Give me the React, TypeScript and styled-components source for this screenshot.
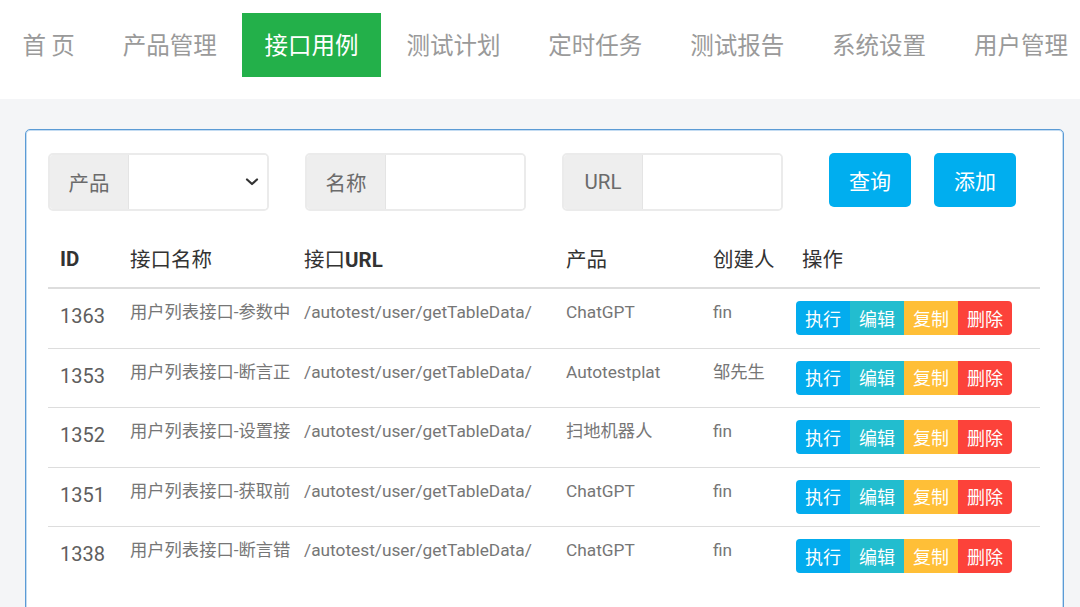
import React from "react";
import styled, { createGlobalStyle } from "styled-components";

const Global = createGlobalStyle`
  html, body { margin: 0; padding: 0; background: #f4f5f7; }
  body { font-family: Roboto, "Noto Sans CJK SC", sans-serif; }
`;

const Page = styled.div`
  width: 1080px;
  height: 607px;
  overflow: hidden;
  background: #f4f5f7;
`;

const Nav = styled.nav`
  display: flex;
  gap: 3.1px;
  height: 99px;
  padding-top: 13px;
  box-sizing: border-box;
  background: #fff;
`;

const NavItem = styled.div<{ $active?: boolean }>`
  height: 64px;
  display: flex;
  align-items: center;
  padding: 0 22.3px 2px 22.5px;
  box-sizing: border-box;
  font-size: 23.5px;
  font-family: "Noto Sans CJK SC", sans-serif;
  white-space: pre;
  color: ${(p) => (p.$active ? "#fff" : "#9a9a9a")};
  background: ${(p) => (p.$active ? "#23b04a" : "transparent")};
`;

const Main = styled.main`
  padding: 30px 16px 0 25px;
`;

const Panel = styled.section`
  background: #fff;
  border: 1px solid #5b9bd5;
  box-shadow: inset 0 0 0 1px #c4dcf2;
  border-radius: 5px;
  padding: 23px 23px 40px 22px;
  min-height: 500px;
`;

const Toolbar = styled.div`
  display: flex;
  align-items: flex-start;
  gap: 36px;
`;

const Group = styled.div`
  display: flex;
  width: 221px;
  height: 58px;
  box-sizing: border-box;
  border: 2px solid #ebebeb;
  border-radius: 5px;
  overflow: hidden;
`;

const Label = styled.div`
  width: 78px;
  flex: none;
  display: flex;
  align-items: center;
  justify-content: center;
  background: #eee;
  color: #6b6b6b;
  font-size: 20.5px;
  border-right: 1px solid #e4e4e4;
  font-family: Roboto, "Noto Sans CJK SC", sans-serif;
`;

const Field = styled.div`
  flex: 1;
  display: flex;
  align-items: center;
  justify-content: flex-end;
  padding-right: 8px;
  background: #fff;
`;

const Buttons = styled.div`
  display: flex;
  gap: 23px;
  margin-left: 10px;
`;

const Btn = styled.button`
  height: 54px;
  padding: 0 20px;
  border: none;
  border-radius: 5px;
  background: #00aeef;
  color: #fff;
  font-size: 21px;
  font-family: "Noto Sans CJK SC", sans-serif;
`;

const Table = styled.table`
  margin-top: 20px;
  width: 992px;
  border-collapse: collapse;
  table-layout: fixed;
`;

const Th = styled.th`
  text-align: left;
  padding: 12px 12px;
  font-size: 20.5px;
  line-height: 30px;
  color: #333;
  font-weight: 700;
  border-bottom: 2px solid #ddd;
  white-space: nowrap;
`;

const HeadCn = styled.span`
  font-weight: 400;
  font-family: "Noto Sans CJK SC", sans-serif;
`;

const Tr = styled.tr`
  border-top: 1px solid #ddd;
`;

const Td = styled.td<{ $big?: boolean; $tight?: boolean }>`
  vertical-align: top;
  padding: ${(p) =>
    p.$tight ? "12px 13px 12.5px 6px" : p.$big ? "12px 13px 12px 12px" : "11px 13px 12px 12px"};
  font-size: ${(p) => (p.$big ? "20px" : "17.3px")};
  line-height: ${(p) => (p.$big ? "30px" : "25px")};
  color: ${(p) => (p.$big ? "#5e5e5e" : "#767676")};
  white-space: nowrap;
  font-family: Roboto, "Noto Sans CJK SC", sans-serif;
`;

const Actions = styled.div`
  display: inline-flex;
  border-radius: 4px;
  overflow: hidden;
  vertical-align: top;
`;

const ActionBtn = styled.span<{ $bg: string }>`
  width: 54px;
  height: 34px;
  display: flex;
  align-items: center;
  justify-content: center;
  background: ${(p) => p.$bg};
  color: #fff;
  font-size: 18px;
  font-family: "Noto Sans CJK SC", sans-serif;
`;

const Chevron = () => (
  <svg width="14" height="10" viewBox="0 0 14 10">
    <path d="M2 2.5 L7 7 L12 2.5" fill="none" stroke="#333" strokeWidth="2.2" strokeLinecap="round" strokeLinejoin="round" />
  </svg>
);

const navItems = ["首 页", "产品管理", "接口用例", "测试计划", "定时任务", "测试报告", "系统设置", "用户管理"];

const rows = [
  { id: "1363", name: "用户列表接口-参数中", product: "ChatGPT", user: "fin" },
  { id: "1353", name: "用户列表接口-断言正", product: "Autotestplat", user: "邹先生" },
  { id: "1352", name: "用户列表接口-设置接", product: "扫地机器人", user: "fin" },
  { id: "1351", name: "用户列表接口-获取前", product: "ChatGPT", user: "fin" },
  { id: "1338", name: "用户列表接口-断言错", product: "ChatGPT", user: "fin" },
];

const actions = [
  { t: "执行", c: "#03acee" },
  { t: "编辑", c: "#22bdcf" },
  { t: "复制", c: "#ffbf37" },
  { t: "删除", c: "#fc423a" },
];

export default function App() {
  return (
    <Page>
      <Global />
      <Nav>
        {navItems.map((n) => (
          <NavItem key={n} $active={n === "接口用例"}>
            {n}
          </NavItem>
        ))}
      </Nav>
      <Main>
        <Panel>
          <Toolbar>
            <Group>
              <Label>产品</Label>
              <Field>
                <Chevron />
              </Field>
            </Group>
            <Group>
              <Label>名称</Label>
              <Field />
            </Group>
            <Group>
              <Label>URL</Label>
              <Field />
            </Group>
            <Buttons>
              <Btn>查询</Btn>
              <Btn>添加</Btn>
            </Buttons>
          </Toolbar>
          <Table>
            <colgroup>
              <col style={{ width: 70 }} />
              <col style={{ width: 174 }} />
              <col style={{ width: 262 }} />
              <col style={{ width: 147 }} />
              <col style={{ width: 89 }} />
              <col style={{ width: 250 }} />
            </colgroup>
            <thead>
              <tr>
                <Th>ID</Th>
                <Th><HeadCn>接口名称</HeadCn></Th>
                <Th><HeadCn>接口</HeadCn>URL</Th>
                <Th><HeadCn>产品</HeadCn></Th>
                <Th><HeadCn>创建人</HeadCn></Th>
                <Th><HeadCn>操作</HeadCn></Th>
              </tr>
            </thead>
            <tbody>
              {rows.map((r) => (
                <Tr key={r.id}>
                  <Td $big>{r.id}</Td>
                  <Td>{r.name}</Td>
                  <Td>/autotest/user/getTableData/</Td>
                  <Td>{r.product}</Td>
                  <Td>{r.user}</Td>
                  <Td $tight>
                    <Actions>
                      {actions.map((a) => (
                        <ActionBtn key={a.t} $bg={a.c}>
                          {a.t}
                        </ActionBtn>
                      ))}
                    </Actions>
                  </Td>
                </Tr>
              ))}
            </tbody>
          </Table>
        </Panel>
      </Main>
    </Page>
  );
}
